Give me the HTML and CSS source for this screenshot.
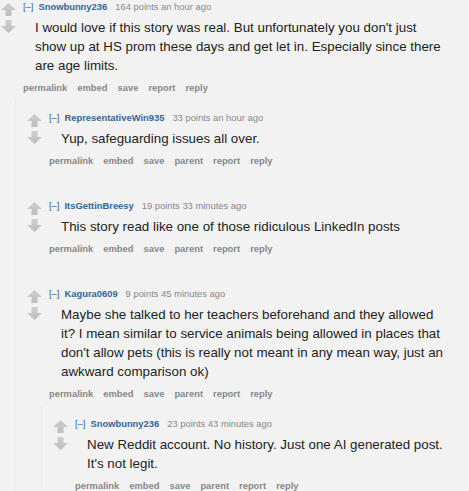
FILE: index.html
```html
<!DOCTYPE html>
<html>
<head>
<meta charset="utf-8">
<link rel="stylesheet" href="styles.css">
</head>
<body>
<svg width="0" height="0" class="defs">
  <defs>
    <linearGradient id="ag" x1="0" y1="0" x2="0" y2="1">
      <stop offset="0" stop-color="#cfcfcf"/>
      <stop offset="1" stop-color="#bdbdbd"/>
    </linearGradient>
    <symbol id="up" viewBox="0 0 15 14"><polygon points="7.5,0 15,7 10.5,7 10.5,13 4.5,13 4.5,7 0,7" fill="url(#ag)"/></symbol>
    <symbol id="down" viewBox="0 0 15 14"><polygon points="4.5,1 10.5,1 10.5,7 15,7 7.5,14 0,7 4.5,7" fill="url(#ag)"/></symbol>
  </defs>
</svg>
<div class="page">
  <div class="comment">
    <div class="row">
      <div class="midcol"><svg class="arrow"><use href="#up"/></svg><svg class="arrow"><use href="#down"/></svg></div>
      <div class="entry">
        <p class="tagline"><span class="expand">[–]</span><a class="author">Snowbunny236</a><span class="score">164 points an hour ago</span></p>
        <div class="md">I would love if this story was real. But unfortunately you don't just show up at HS prom these days and get let in. Especially since there are age limits.</div>
        <ul class="buttons"><li>permalink</li><li>embed</li><li>save</li><li>report</li><li>reply</li></ul>
      </div>
    </div>
    <div class="child">
      <div class="comment">
        <div class="row">
          <div class="midcol"><svg class="arrow"><use href="#up"/></svg><svg class="arrow"><use href="#down"/></svg></div>
          <div class="entry">
            <p class="tagline"><span class="expand">[–]</span><a class="author">RepresentativeWin935</a><span class="score">33 points an hour ago</span></p>
            <div class="md">Yup, safeguarding issues all over.</div>
            <ul class="buttons"><li>permalink</li><li>embed</li><li>save</li><li>parent</li><li>report</li><li>reply</li></ul>
          </div>
        </div>
      </div>
      <div class="comment">
        <div class="row">
          <div class="midcol"><svg class="arrow"><use href="#up"/></svg><svg class="arrow"><use href="#down"/></svg></div>
          <div class="entry">
            <p class="tagline"><span class="expand">[–]</span><a class="author">ItsGettinBreesy</a><span class="score">19 points 33 minutes ago</span></p>
            <div class="md">This story read like one of those ridiculous LinkedIn posts</div>
            <ul class="buttons"><li>permalink</li><li>embed</li><li>save</li><li>parent</li><li>report</li><li>reply</li></ul>
          </div>
        </div>
      </div>
      <div class="comment">
        <div class="row">
          <div class="midcol"><svg class="arrow"><use href="#up"/></svg><svg class="arrow"><use href="#down"/></svg></div>
          <div class="entry">
            <p class="tagline"><span class="expand">[–]</span><a class="author">Kagura0609</a><span class="score">9 points 45 minutes ago</span></p>
            <div class="md">Maybe she talked to her teachers beforehand and they allowed it? I mean similar to service animals being allowed in places that don't allow pets (this is really not meant in any mean way, just an awkward comparison ok)</div>
            <ul class="buttons"><li>permalink</li><li>embed</li><li>save</li><li>parent</li><li>report</li><li>reply</li></ul>
          </div>
        </div>
        <div class="child">
          <div class="comment">
            <div class="row">
              <div class="midcol"><svg class="arrow"><use href="#up"/></svg><svg class="arrow"><use href="#down"/></svg></div>
              <div class="entry">
                <p class="tagline"><span class="expand">[–]</span><a class="author">Snowbunny236</a><span class="score">23 points 43 minutes ago</span></p>
                <div class="md">New Reddit account. No history. Just one AI generated post. It's not legit.</div>
                <ul class="buttons"><li>permalink</li><li>embed</li><li>save</li><li>parent</li><li>report</li><li>reply</li></ul>
              </div>
            </div>
          </div>
        </div>
      </div>
    </div>
  </div>
</div>
</body>
</html>
```

FILE: styles.css
```css
html, body {
  margin: 0;
  padding: 0;
  background: #f2f2f2;
}
body {
  font-family: "Liberation Sans", Arial, sans-serif;
  color: #222;
  overflow: hidden;
}
.defs {
  position: absolute;
  width: 0;
  height: 0;
}
.page {
  padding-right: 21px;
  height: 491px;
}
.comment {
  display: flex;
  flex-direction: column;
}
.row {
  display: flex;
  align-items: flex-start;
}
.midcol {
  display: flex;
  flex-direction: column;
  gap: 2px;
  margin-left: 1px;
  padding-top: 3px;
  width: 15px;
  flex: none;
}
.arrow {
  width: 15px;
  height: 14px;
  display: block;
}
.entry {
  margin-left: 7px;
  flex: 1;
  min-width: 0;
}
.tagline {
  margin: 0;
  font-size: 9.4px;
  line-height: 13px;
  color: #888;
}
.expand {
  color: #369;
  margin-right: 5px;
}
.author {
  color: #369;
  font-weight: bold;
  margin-right: 8px;
}
.md {
  margin: 5px 0 0 12px;
  font-size: 13.35px;
  line-height: 19px;
  color: #222;
}
.buttons {
  list-style: none;
  margin: 6px 0 0 0;
  padding: 0;
  display: flex;
  gap: 10px;
  font-size: 9.4px;
  line-height: 13px;
  font-weight: bold;
  color: #888;
}
.child {
  margin: 7px 0 0 15px;
  padding: 10px 0 0 10px;
  border-left: 1px dotted #dde;
  display: flex;
  flex-direction: column;
  gap: 32px;
  flex: 1;
}
```
